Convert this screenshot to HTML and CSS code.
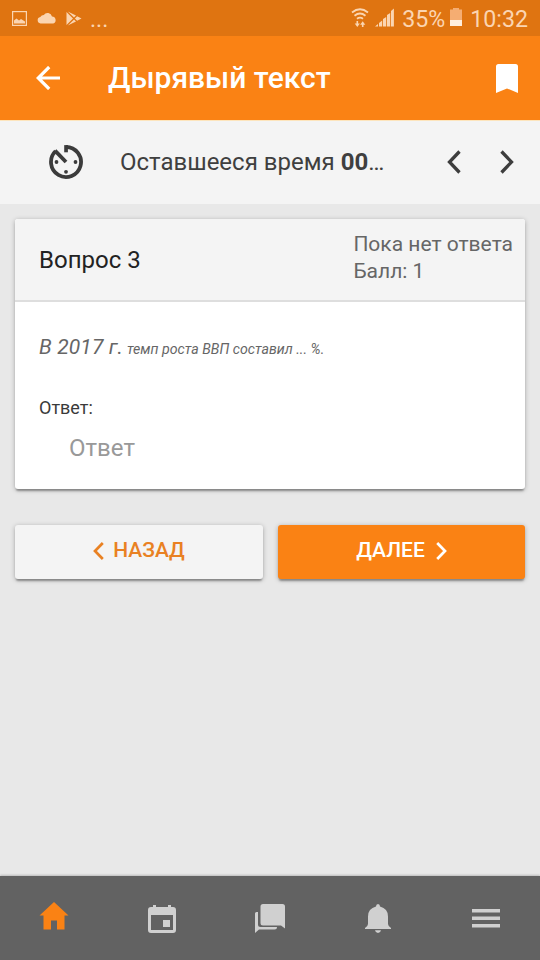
FILE: index.html
```html
<!DOCTYPE html>
<html lang="ru">
<head>
<meta charset="utf-8">
<title>Дырявый текст</title>
<link rel="stylesheet" href="styles.css">
</head>
<body>
<div class="app">
  <div class="status">
    <svg class="st-img" width="15" height="15" viewBox="0 0 15 15"><rect x=".6" y=".6" width="13.8" height="13.8" fill="none" stroke="currentColor" stroke-width="1.2"/><path d="M2 12.500V9.500l2.500-2 2.500 2 2-1.500 4 2.500v2z" fill="currentColor"/></svg>
    <svg class="st-cloud" width="20" height="12" viewBox="0 0 20 12"><path d="M3.500 11.500a3.300 3.300 0 0 1-.2-6.500A4 4 0 0 1 6.800 3a4.500 4.500 0 0 1 8.200 1.500A3.600 3.600 0 0 1 16.200 11.500z" fill="currentColor"/></svg>
    <svg class="st-play" width="16" height="15" viewBox="0 0 16 15"><path d="M.5 1v13L7 7.500zM1.800.4L8 6.600l2-2zM1.800 14.600L8 8.400l2 2zM8.900 7.500l2.200-2.300L15.500 7.500l-4.400 2.300z" fill="currentColor"/></svg>
    <span class="st-more">...</span>
    <span class="grow"></span>
    <svg class="st-wifi" width="18" height="20" viewBox="0 0 18 20" fill="none" stroke="currentColor" stroke-width="1.800"><path d="M1 4.500q8-6.500 16 0M3.500 7.800q5.500-4.500 11 0M6 10.800q3-2.400 6 0"/><path d="M6.300 13v3M11.700 19v-3" stroke-width="1.600"/><path d="M3.700 15.500h5.200L6.300 19zM9.100 16.800h5.200L11.700 13.300z" fill="currentColor" stroke="none"/></svg>
    <svg class="st-sig" width="19" height="19" viewBox="0 0 19 19" fill="currentColor"><path d="M0 18.500l3-2.500v2.500zM4 15l3.200-2.500v6H4zM8 11l3.200-2v9.500H8zM12 7l3.200-2v13.500H12zM16 3l2.900-2.500v18H16z"/></svg>
    <span class="st-text st-pct">35%</span>
    <svg class="st-bat" width="12" height="18" viewBox="0 0 12 18"><path d="M3 0h6v1.500h3V16H0V1.500h3z" fill="#f5ad72"/><path d="M0 12h12v6H0z" fill="#ffeedc"/></svg>
    <span class="st-text">10:32</span>
  </div>
  <header class="header">
    <svg class="back" width="24" height="24" viewBox="0 0 24 24" fill="none" stroke="#fff" stroke-width="3.200"><path d="M24 12H3M13.200 1L2.200 12l11 11"/></svg>
    <h1 class="title">Дырявый текст</h1>
    <svg class="mark" width="22" height="29" viewBox="0 0 22 29"><path d="M2.500 0h17Q22 0 22 2.500V29l-11-4.600L0 29V2.500Q0 0 2.500 0z" fill="#fff"/></svg>
  </header>
  <div class="timer">
    <svg class="clock" width="36" height="36" viewBox="0 0 36 36"><path d="M18 3A15 15 0 1 1 7.600 7.200" fill="none" stroke="#3b3b3b" stroke-width="3.800"/><path d="M16.200 1.100h3.700v7.200h-3.700z" fill="#3b3b3b"/><path d="M7 6.600L18 18" stroke="#3b3b3b" stroke-width="3.800"/><g fill="#3b3b3b"><circle cx="8.500" cy="18" r="1.900"/><circle cx="27.500" cy="18" r="1.900"/><circle cx="18" cy="27.800" r="1.900"/></g></svg>
    <div class="left">Оставшееся время <b>00</b>…</div>
    <svg class="prev" width="14" height="24" viewBox="0 0 14 24" fill="none" stroke="#3d3d3d" stroke-width="3.300"><path d="M12.500 1.500L2.500 12l10 10.500"/></svg>
    <svg class="next" width="14" height="24" viewBox="0 0 14 24" fill="none" stroke="#3d3d3d" stroke-width="3.300"><path d="M1.500 1.500L11.500 12l-10 10.500"/></svg>
  </div>
  <main class="content">
    <section class="card">
      <div class="card-head">
        <h2 class="question">Вопрос 3</h2>
        <div class="state">Пока нет ответа<br>Балл: 1</div>
      </div>
      <div class="card-body">
        <p class="task"><span class="year">В 2017 г.</span> <span class="rest">темп роста ВВП составил ... %.</span></p>
        <div class="label">Ответ:</div>
        <div class="field">Ответ</div>
      </div>
    </section>
    <div class="buttons">
      <div class="btn btn-back"><svg width="11" height="18" viewBox="0 0 11 18" fill="none" stroke="currentColor" stroke-width="2.700"><path d="M9.800 1L2 9l7.800 8"/></svg><span>НАЗАД</span></div>
      <div class="btn btn-next"><span>ДАЛЕЕ</span><svg width="11" height="18" viewBox="0 0 11 18" fill="none" stroke="currentColor" stroke-width="2.700"><path d="M1.200 1L9 9l-7.800 8"/></svg></div>
    </div>
  </main>
  <nav class="tabs">
    <div class="tab tab-on"><svg width="30" height="28" viewBox="0 0 30 28"><path d="M15 0L29.500 13.500H25.500V27.500H18V18.500H12V27.500H4.500V13.500H.5z" fill="currentColor"/></svg></div>
    <div class="tab"><svg width="28" height="28" viewBox="0 0 28 28"><path fill-rule="evenodd" d="M5 0h3v2h12V0h3v2h2q3 0 3 3v20q0 3-3 3H3q-3 0-3-3V5q0-3 3-3h2zM3 10v15h22V10zM15 15h7v7h-7z" fill="currentColor"/></svg></div>
    <div class="tab"><svg width="30" height="29" viewBox="0 0 30 29"><path d="M8 0h19.500Q30 0 30 2.500V24.500l-4-3H8q-2.500 0-2.500-2.500V2.500Q5.500 0 8 0zM1.500 8H3v12.500q0 2.500 2.500 2.500H22q0 2.500-2.500 2.500H4L0 29V9.500Q0 8 1.500 8z" fill="currentColor"/></svg></div>
    <div class="tab"><svg width="26" height="29" viewBox="0 0 26 29"><path d="M13 0q2 0 2 2.500 8 2 8 10V20q0 2 3 4v1H0v-1q3-2 3-4v-7.500q0-8 8-10Q11 0 13 0zM10 26.300h6q-.5 2.700-3 2.700t-3-2.700z" fill="currentColor"/></svg></div>
    <div class="tab"><svg width="28" height="19" viewBox="0 0 28 19"><path d="M0 0h28v3.600H0zM0 7.500h28v3.600H0zM0 15h28v3.600H0z" fill="currentColor"/></svg></div>
  </nav>
</div>
</body>
</html>
```
FILE: styles.css
```css
* { box-sizing: border-box; }
body { margin: 0; font-family: Roboto, "Liberation Sans", sans-serif; }
svg { display: block; flex: none; }
.app { width: 540px; height: 960px; display: flex; flex-direction: column; background: #e8e8e8; overflow: hidden; }
.grow { flex: 1; }

.status { height: 36px; flex: none; display: flex; align-items: center; background: #df7411; color: #fbd5b1; padding: 0 12px; }
.st-cloud { margin: 0 0 1px 10px; }
.st-play { margin-left: 9px; }
.st-more { margin-left: 8px; font-size: 23px; line-height: 36px; padding-top: 3px; }
.st-wifi { margin: 0 6px 1px 0; }
.st-sig { margin: 0 8px 1px 0; }
.st-text { font-size: 23.2px; line-height: 36px; padding-top: 2px; }
.st-pct { margin-right: 5px; }
.st-bat { margin: 0 8px 2px 0; }

.header { height: 84px; flex: none; display: flex; align-items: center; background: #fa8214; padding: 0 22px 0 36px; }
.back { margin-bottom: 1px; }
.title { flex: 1; margin: 0 0 0 48px; font-size: 30px; font-weight: 500; line-height: 40px; color: #fff; }

.timer { height: 84px; flex: none; display: flex; align-items: center; background: #f4f4f4; box-shadow: inset 0 1px #fde5bd; padding: 0 26px 0 48px; }
.left { width: 270px; margin-left: 36px; font-size: 24px; line-height: 34px; color: #3f3f3f; white-space: nowrap; }
.prev { margin-left: auto; }
.next { margin-left: 39px; }

.content { flex: 1; padding: 15px 15px 0; }
.card { height: 270px; display: flex; flex-direction: column; background: #fff; border-radius: 3px; box-shadow: 0 3px 2px -1px rgba(0,0,0,.3), 0 1px 5px rgba(0,0,0,.28); overflow: hidden; }
.card-head { height: 83px; flex: none; display: flex; justify-content: space-between; background: #f4f4f4; border-bottom: 2px solid #dedede; padding: 0 12px 0 24px; }
.question { margin: 0; font-size: 24px; font-weight: 400; line-height: 82px; color: #222; }
.state { padding-top: 12px; font-size: 21px; line-height: 27px; color: #666; }
.card-body { padding: 29px 24px 0; }
.task { margin: 0; font-style: italic; line-height: 32px; color: #666; }
.year { font-size: 21px; letter-spacing: .15px; }
.rest { font-size: 14.2px; }
.label { margin-top: 31px; font-size: 18px; line-height: 24px; color: #3a3a3a; }
.field { margin: 12px 0 0 30px; font-size: 24px; line-height: 32px; color: #999; }
.buttons { display: flex; gap: 15px; margin-top: 36px; }
.btn { height: 54px; display: flex; align-items: center; justify-content: center; gap: 9px; border-radius: 3px; font-size: 21px; font-weight: 500; box-shadow: 0 3px 2px -1px rgba(0,0,0,.3), 0 1px 5px rgba(0,0,0,.28); }
.btn span { padding-bottom: 4px; }
.btn svg { margin-bottom: 2px; }
.btn-back { width: 248px; background: #f4f4f4; color: #e98122; }
.btn-next { width: 247px; gap: 11px; background: #fa8214; color: #fff; }

.tabs { height: 84px; flex: none; display: flex; background: #626262; color: #d0d0d0; box-shadow: 0 -1px 2px rgba(0,0,0,.2); }
.tab { flex: 1; display: flex; align-items: center; justify-content: center; padding-top: 1px; }
.tab-on { color: #fa8214; padding: 0 0 4px; }
```
